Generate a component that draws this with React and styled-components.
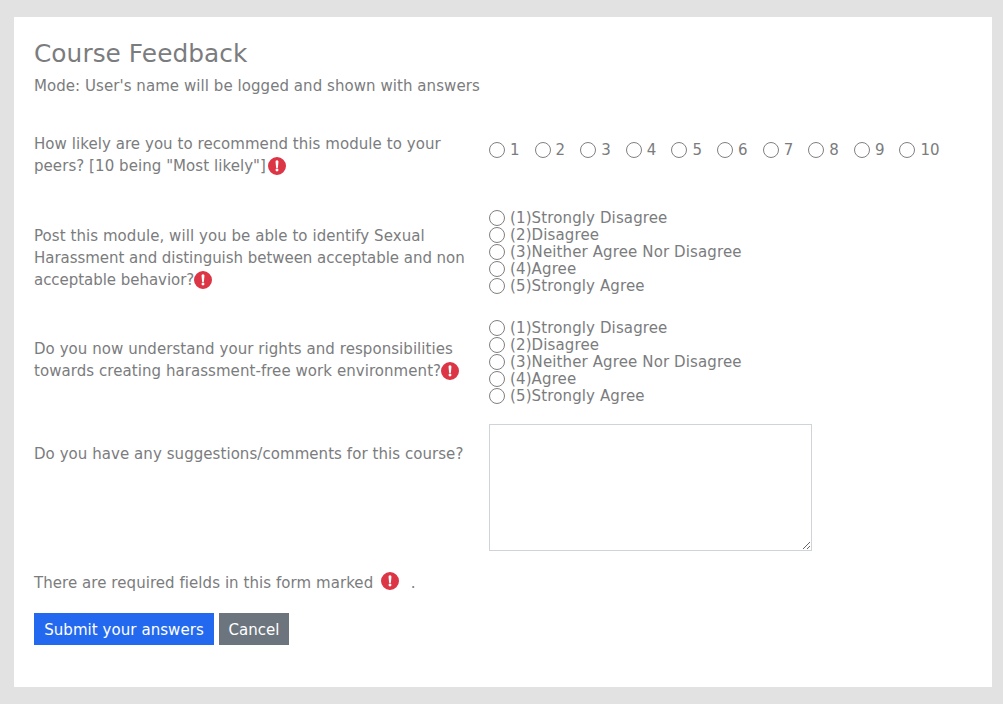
import React from "react";
import styled, { createGlobalStyle } from "styled-components";

const Global = createGlobalStyle`
  html, body { margin: 0; padding: 0; }
  body { background: #e2e2e2; font-family: "DejaVu Sans", Verdana, sans-serif; color: #7b7c7e; letter-spacing: 0.06px; }
  * { box-sizing: border-box; }
`;
const Page = styled.div`
  width: 1003px;
  height: 704px;
  padding: 17px 11px 17px 14px;
  overflow: hidden;
`;
const Card = styled.main`
  background: #fff;
  height: 670px;
  padding: 20px 20px 0;
`;
const Title = styled.h1`
  margin: 0;
  font-size: 24.8px;
  line-height: 34px;
  font-weight: 400;
  color: #7b7c7e;
`;
const Mode = styled.p`
  margin: 4px 0 0;
  font-size: 15px;
  line-height: 22px;
`;
const Form = styled.form`
  margin: 0;
  padding-top: 36px;
  display: flex;
  flex-direction: column;
`;
const Row = styled.div`
  display: grid;
  grid-template-columns: 455px 1fr;
  margin-bottom: ${(p) => p.$gap}px;
`;
const Question = styled.div`
  font-size: 15px;
  line-height: 22px;
  padding-top: ${(p) => p.$top}px;
`;
const Tight = styled.span`
  letter-spacing: -0.04px;
`;
const Answer = styled.div`
  padding-top: ${(p) => p.$top}px;
`;
const Inline = styled.div`
  display: flex;
  gap: 15px;
  font-size: 15px;
  line-height: 17px;
`;
const Stack = styled.div`
  display: flex;
  flex-direction: column;
  font-size: 15px;
  line-height: 17px;
  letter-spacing: 0.12px;
`;
const Option = styled.label`
  display: flex;
  align-items: center;
  gap: 5px;
  height: 17px;
`;
const Radio = styled.input.attrs({ type: "radio" })`
  appearance: none;
  width: 16px;
  height: 16px;
  margin: -2px 0 0;
  flex: none;
  background: #fff;
  border: 1px solid #808080;
  border-radius: 50%;
`;
const Comments = styled.textarea`
  display: block;
  width: 323px;
  height: 127px;
  margin: 0;
  border: 1px solid #ced4da;
  background: #fff;
  padding: 6px;
`;
const Mark = styled.svg`
  display: inline-block;
  width: 18px;
  height: 18px;
  vertical-align: ${(p) => p.$drop ?? -4}px;
  margin-left: ${(p) => p.$left || 0}px;
  margin-right: ${(p) => p.$right || 0}px;
`;
const Note = styled.p`
  margin: 0;
  font-size: 15px;
  line-height: 22px;
`;
const Buttons = styled.div`
  display: flex;
  gap: 5px;
  margin-top: 19px;
`;
const Button = styled.button`
  height: 32px;
  width: ${(p) => p.$w}px;
  padding: 1px 0 0;
  border: none;
  border-radius: 0;
  font: 400 15px "DejaVu Sans", Verdana, sans-serif;
  letter-spacing: 0.06px;
  color: #fff;
  background: ${(p) => p.$bg};
`;

const Required = (p) => (
  <Mark viewBox="0 0 16 16" {...p}>
    <path
      fill="#dc3545"
      d="M16 8A8 8 0 1 1 0 8a8 8 0 0 1 16 0M8 2.900a1.300 1.300 0 0 0-1.300 1.400l.45 4.700a.85.850 0 0 0 1.700 0l.45-4.700A1.300 1.300 0 0 0 8 2.900m0 7.300a1.300 1.300 0 1 0 0 2.600 1.300 1.300 0 0 0 0-2.600"
    />
  </Mark>
);

const scale = ["1", "2", "3", "4", "5", "6", "7", "8", "9", "10"];
const agree = [
  "(1)Strongly Disagree",
  "(2)Disagree",
  "(3)Neither Agree Nor Disagree",
  "(4)Agree",
  "(5)Strongly Agree",
];

const AgreeList = ({ name }) => (
  <Stack>
    {agree.map((a) => (
      <Option key={a}>
        <Radio name={name} />
        {a}
      </Option>
    ))}
  </Stack>
);

export default function App() {
  return (
    <Page>
      <Global />
      <Card>
        <Title>Course Feedback</Title>
        <Mode>Mode: User's name will be logged and shown with answers</Mode>
        <Form onSubmit={(e) => e.preventDefault()}>
          <Row $gap={33}>
            <Question $top={0}>
              How likely are you to recommend this module to your peers? [10 being "Most likely"]
              <Required $left={2} />
            </Question>
            <Answer $top={9}>
              <Inline>
                {scale.map((n) => (
                  <Option key={n}>
                    <Radio name="q1" />
                    {n}
                  </Option>
                ))}
              </Inline>
            </Answer>
          </Row>
          <Row $gap={25}>
            <Question $top={15}>
              Post this module, will you be able to identify Sexual{" "}
              <Tight>Harassment and distinguish between acceptable and non acceptable behavior?</Tight>
              <Required />
            </Question>
            <Answer $top={0}>
              <AgreeList name="q2" />
            </Answer>
          </Row>
          <Row $gap={19}>
            <Question $top={18}>
              Do you now understand your rights and responsibilities towards creating harassment-free work environment?
              <Required />
            </Question>
            <Answer $top={0}>
              <AgreeList name="q3" />
            </Answer>
          </Row>
          <Row $gap={21}>
            <Question $top={19}>Do you have any suggestions/comments for this course?</Question>
            <Answer $top={0}>
              <Comments />
            </Answer>
          </Row>
          <Note>
            There are required fields in this form marked <Required $left={3} $right={7} $drop={-2} /> .
          </Note>
          <Buttons>
            <Button $bg="#2369f0" $w={180} type="submit">Submit your answers</Button>
            <Button $bg="#6c757d" $w={70} type="button">Cancel</Button>
          </Buttons>
        </Form>
      </Card>
    </Page>
  );
}
